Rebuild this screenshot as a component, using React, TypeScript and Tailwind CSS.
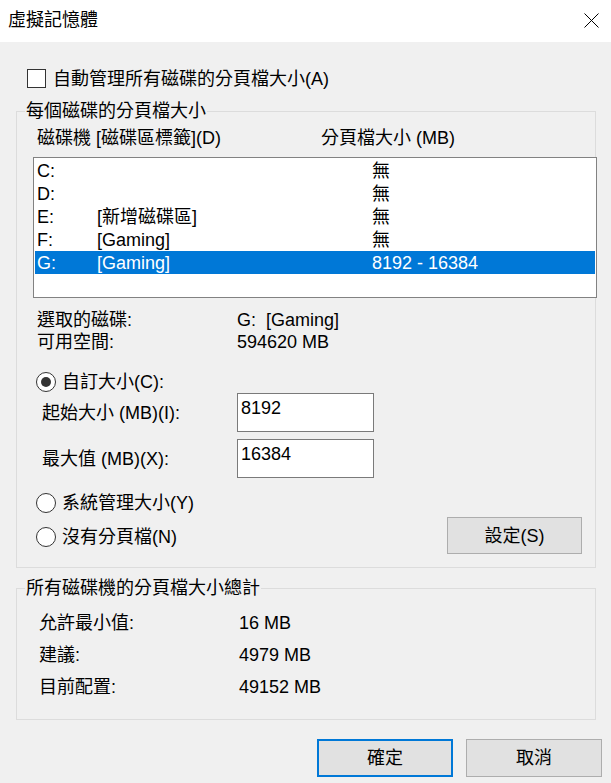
import React from "react";

function Radio({ checked }: { checked?: boolean }) {
  return (
    <div className="w-[20px] h-[20px] rounded-full border border-[#333333] bg-white flex items-center justify-center shrink-0">
      {checked ? <div className="w-[10px] h-[10px] rounded-full bg-[#333333]" /> : null}
    </div>
  );
}

const drives = [
  { d: "C:", l: "", s: "無" },
  { d: "D:", l: "", s: "無" },
  { d: "E:", l: "[新增磁碟區]", s: "無" },
  { d: "F:", l: "[Gaming]", s: "無" },
  { d: "G:", l: "[Gaming]", s: "8192 - 16384", sel: true },
];

export default function App() {
  return (
    <div className="w-[611px] h-[783px] bg-[#f0f0f0] flex flex-col text-[18px] leading-[22px] text-black font-['Liberation_Sans','Noto_Sans_CJK_TC',sans-serif] overflow-hidden">
      <div className="h-[42px] bg-white flex items-center justify-between pl-[8px] pr-[12px] pb-[2px] shrink-0">
        <span>虛擬記憶體</span>
        <svg width="15" height="15" viewBox="0 0 15 15">
          <path d="M0.5 0.5 L14.5 14.5 M14.5 0.5 L0.5 14.5" stroke="#000" strokeWidth="1" fill="none" />
        </svg>
      </div>

      <div className="flex flex-col pl-[16px] pr-[15px]">
        <div className="mt-[27px] h-[19px] flex items-center gap-[7px] pl-[11px]">
          <div className="w-[19px] h-[19px] border border-[#333333] bg-white shrink-0" />
          <span>自動管理所有磁碟的分頁檔大小(A)</span>
        </div>

        <div className="relative mt-[23px] border border-[#dcdcdc] pl-[16px] pt-[16px] pb-[13px] flex flex-col">
          <span className="absolute left-[8px] top-[-12px] px-[1px] bg-[#f0f0f0]">每個磁碟的分頁檔大小</span>
          <div className="h-[20px] flex items-center pl-[4px]">
            <span className="w-[284px]">磁碟機 [磁碟區標籤](D)</span>
            <span>分頁檔大小 (MB)</span>
          </div>
          <div className="mt-[9px] h-[141px] mr-[-2px] border border-[#828282] bg-white p-[1px] flex flex-col">
            {drives.map((r) => (
              <div
                key={r.d}
                className={
                  r.sel
                    ? "h-[23px] flex items-center pl-[2px] bg-[#0078d7] text-white"
                    : "h-[23px] flex items-center pl-[2px]"
                }
              >
                <span className="w-[60px]">{r.d}</span>
                <span className="w-[275px]">{r.l}</span>
                <span>{r.s}</span>
              </div>
            ))}
          </div>

          <div className="mt-[11px] flex flex-col pl-[4px]">
            <div className="h-[22px] flex items-center">
              <span className="w-[200px]">選取的磁碟:</span>
              <span>G:&nbsp;&nbsp;[Gaming]</span>
            </div>
            <div className="h-[22px] flex items-center">
              <span className="w-[200px]">可用空間:</span>
              <span>594620 MB</span>
            </div>
          </div>

          <div className="mt-[19px] h-[20px] flex items-center gap-[6px] pl-[3px]">
            <Radio checked />
            <span>自訂大小(C):</span>
          </div>

          <div className="mt-[1px] h-[39px] flex items-center pl-[9px]">
            <span className="w-[195px]">起始大小 (MB)(I):</span>
            <div className="w-[137px] h-[39px] border border-[#7a7a7a] bg-white pl-[3px] pt-[3px]">8192</div>
          </div>
          <div className="mt-[7px] h-[39px] flex items-center pl-[9px]">
            <span className="w-[195px]">最大值 (MB)(X):</span>
            <div className="w-[137px] h-[39px] border border-[#7a7a7a] bg-white pl-[3px] pt-[3px]">16384</div>
          </div>

          <div className="mt-[15px] h-[20px] flex items-center gap-[6px] pl-[3px]">
            <Radio />
            <span>系統管理大小(Y)</span>
          </div>

          <div className="mt-[4px] flex justify-between items-start">
            <div className="mt-[10px] h-[20px] flex items-center gap-[6px] pl-[3px]">
              <Radio />
              <span>沒有分頁檔(N)</span>
            </div>
            <div className="w-[135px] h-[37px] mr-[13px] border border-[#adadad] bg-[#e1e1e1] flex items-center justify-center">
              設定(S)
            </div>
          </div>
        </div>

        <div className="relative mt-[20px] border border-[#dcdcdc] pl-[22px] pt-[18px] pb-[16px] flex flex-col">
          <span className="absolute left-[8px] top-[-12px] px-[1px] bg-[#f0f0f0]">所有磁碟機的分頁檔大小總計</span>
          <div className="h-[32px] flex items-center">
            <span className="w-[200px]">允許最小值:</span>
            <span>16 MB</span>
          </div>
          <div className="h-[32px] flex items-center">
            <span className="w-[200px]">建議:</span>
            <span>4979 MB</span>
          </div>
          <div className="h-[32px] flex items-center">
            <span className="w-[200px]">目前配置:</span>
            <span>49152 MB</span>
          </div>
        </div>
      </div>

      <div className="mt-[19px] flex justify-end gap-[13px] pr-[9px]">
        <div className="w-[136px] h-[38px] border-2 border-[#0078d7] bg-[#e1e1e1] flex items-center justify-center">
          確定
        </div>
        <div className="w-[136px] h-[38px] border border-[#adadad] bg-[#e1e1e1] flex items-center justify-center">
          取消
        </div>
      </div>
    </div>
  );
}
